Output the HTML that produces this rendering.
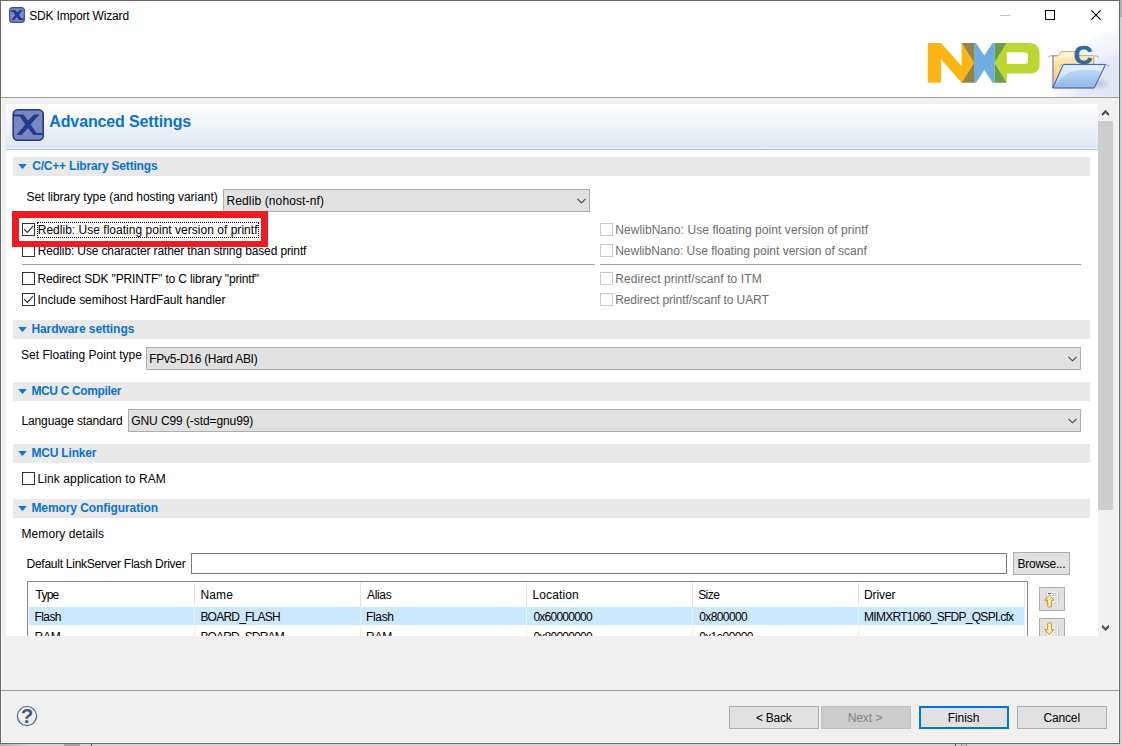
<!DOCTYPE html>
<html>
<head>
<meta charset="utf-8">
<title>SDK Import Wizard</title>
<style>
html,body{margin:0;padding:0;}
body{width:1122px;height:746px;overflow:hidden;background:#e1e1e1;font-family:"Liberation Sans",sans-serif;font-size:12px;color:#000;position:relative;}
.a{position:absolute;}
.t{position:absolute;white-space:nowrap;line-height:14px;height:14px;}
.b{font-weight:bold;color:#0a72d5;}
.sec{position:absolute;left:13px;width:1077px;height:19px;background:#e9e9e9;}
.sec svg{position:absolute;left:5px;top:7px;}
.cb{position:absolute;width:11px;height:11px;border:1px solid #333;background:#fff;}
.cb.dis{border-color:#cccccc;}
.cb svg{position:absolute;left:0;top:0;}
.combo{position:absolute;height:21px;border:1px solid #adadad;background:#e1e1e1;}
.combo svg{position:absolute;right:3px;top:8px;}
.btn{position:absolute;border:1px solid #adadad;background:#e1e1e1;box-sizing:border-box;}
.gray{color:#6d6d6d;}
.vl{position:absolute;width:1px;background:#f0f0f0;top:583px;height:53px;}
.vl b{position:absolute;left:0;top:0;width:1px;height:24px;background:#e2e2e2;}
.vl u{position:absolute;left:0;top:24px;width:1px;height:18px;background:#e6f3ff;}
</style>
</head>
<body>
<div class="a" style="left:1120px;top:0;width:2px;height:17px;background:#b0b0b0"></div>
<div class="a" style="left:1120px;top:17px;width:2px;height:729px;background:#cfcfcf"></div>
<div class="a" style="left:0;top:744px;width:1122px;height:2px;background:linear-gradient(90deg,#b4b4b4 0,#d2d2d2 30px,#d2d2d2 100%)"></div>
<div class="a" style="left:64px;top:744px;width:16px;height:2px;background:#a4a4a4"></div>
<div class="a" style="left:91px;top:744px;width:1px;height:2px;background:#555"></div>
<div class="a" style="left:955px;top:744px;width:1px;height:2px;background:#555"></div>
<div class="a" style="left:961px;top:744px;width:6px;height:2px;background:#c4c4c4;border-left:1px solid #999;border-right:1px solid #999;box-sizing:border-box"></div>
<div class="a" style="left:0;top:0;width:1118px;height:742px;border:1px solid #6b6b6b;background:#f0f0f0"></div>
<div class="a" id="titlearea" style="left:1px;top:1px;width:1118px;height:96px;background:#fff;overflow:hidden">
<div class="a" style="left:1018px;top:0;width:100px;height:96px;background:radial-gradient(circle at 106px 102px, #dfe4f5 0, #e3e8f6 40px, #e6eaf7 47px, #eff2fa 53px, #f5f7fc 68px, rgba(255,255,255,0) 75px)"></div>
</div>
<svg class="a" style="left:9px;top:7px" width="16" height="16" viewBox="0 0 32 32"><rect x="1.2" y="1.2" width="29.6" height="29.6" rx="6" fill="#7f89c1" stroke="#3a50a0" stroke-width="2.2"/><path d="M4 6.5 L13 6.5 L16.5 11.5 L21 6.5 L27 6.5 L19.5 15.5 L24.5 23 L29 23 L29 26 L20.5 26 L16 19.5 L10.5 26 L5 26 L12.8 16 L8.5 9.5 L4 9.5 Z" fill="#1c3c8e" stroke="#1c3c8e" stroke-width="0.5" stroke-linejoin="round"/></svg>
<div class="t " style="left:29.2px;top:9px;letter-spacing:-0.175px;">SDK Import Wizard</div>
<div class="a" style="left:1000px;top:15px;width:10px;height:1px;background:#c0c0c0"></div>
<div class="a" style="left:1045px;top:10px;width:8px;height:8px;border:1px solid #000"></div>
<svg class="a" style="left:1091px;top:10px" width="10" height="10" viewBox="0 0 10 10"><path d="M0.3 0.3 L9.7 9.7 M9.7 0.3 L0.3 9.7" stroke="#000" stroke-width="1.1" fill="none"/></svg>
<svg class="a" style="left:920px;top:36px" width="130" height="54" viewBox="920 36 130 54">
<polygon points="927.8,42.9 941,42.9 961.6,66 961.6,42.9 974,62.8 961.6,82.7 941,59.2 941,82.7 927.8,82.7" fill="#fdb515"/>
<polygon points="961.6,42.9 974,42.9 974,62.8" fill="#928647"/>
<polygon points="961.6,82.7 974,82.7 974,62.8" fill="#928647"/>
<polygon points="974,42.9 976,42.9 984.3,55.5 992.6,42.9 994.7,42.9 994.7,82.7 992.6,82.7 984.3,70 976,82.7 974,82.7" fill="#6daedf"/>
<polygon points="994.7,42.9 1006.8,42.9 994.7,62.8" fill="#6b9c47"/>
<polygon points="994.7,82.7 1006.8,82.7 994.7,62.8" fill="#6b9c47"/>
<path d="M1006.8,42.9 L1028.6,42.9 Q1039.6,42.9 1039.6,53.9 L1039.6,64.6 Q1039.6,73.6 1030.6,73.6 L1006.8,73.6 L1006.8,82.7 L994.7,62.8 Z M1006.8,52.3 L1006.8,63.9 L1025,63.9 Q1028,63.9 1028,60.9 L1028,55.3 Q1028,52.3 1025,52.3 Z" fill="#bdd730" fill-rule="evenodd"/>
</svg>
<svg class="a" style="left:1044px;top:40px" width="70" height="54" viewBox="1044 40 70 54">
<defs>
<linearGradient id="fb" x1="0" y1="0" x2="0" y2="1"><stop offset="0" stop-color="#fefae8"/><stop offset="0.25" stop-color="#fbe9ae"/><stop offset="1" stop-color="#f2c95f"/></linearGradient>
<linearGradient id="ff" x1="0" y1="0" x2="0" y2="1"><stop offset="0" stop-color="#cfe4fa"/><stop offset="1" stop-color="#8db6e8"/></linearGradient>
<radialGradient id="sh" cx="0.5" cy="0.5" r="0.5"><stop offset="0" stop-color="#8a86a8" stop-opacity="0.35"/><stop offset="1" stop-color="#8a86a8" stop-opacity="0"/></radialGradient>
</defs>
<ellipse cx="1099" cy="84" rx="12" ry="7" fill="url(#sh)"/>
<path d="M1053,87.7 L1053,55.7 L1057.6,55.7 Q1058.6,55.7 1059.2,54.6 L1060.2,52.8 Q1060.9,51.6 1062,51.6 L1075,51.6 L1076,55.7 L1093.8,55.7 L1093.8,87.7 Z" fill="url(#fb)" stroke="#c39a3a" stroke-width="0.9"/>
<path d="M1053,87.7 L1053,56" stroke="#8f8fd0" stroke-width="1.2"/>
<path d="M1048.5,57.5 Q1049,55.6 1051,55.8 L1057,55.8 M1095,55.8 Q1098.5,55.6 1098.8,57.8 M1059.5,66.6 Q1060,64.6 1062,64.6 M1106,64.6 Q1108.6,64.8 1108.8,67" stroke="#9a9a9a" stroke-width="0.9" fill="none"/>
<text x="1073.8" y="63.8" font-family="'Liberation Sans',sans-serif" font-weight="bold" font-size="26" fill="#33689c" stroke="#33689c" stroke-width="0.7">C</text>
<path d="M1063.3,64.4 L1105.6,64.4 L1094.2,88 L1052.7,88 Z" fill="url(#ff)" stroke="#3756c4" stroke-width="1"/>
<path d="M1064.2,65.4 L1104,65.4 L1101,71.5 Q1080,66.5 1066.5,74 Q1058,80 1054.6,87 Z" fill="#ffffff" fill-opacity="0.45"/>
</svg>
<div class="a" style="left:1px;top:97px;width:1118px;height:1px;background:#a0a0a0"></div>
<div class="a" style="left:6px;top:104px;width:1092px;height:532px;background:#fff"></div>
<div class="a" style="left:6px;top:104px;width:1092px;height:44px;background:linear-gradient(#ffffff 0,#fdfdfe 10%,#e0e7f2 100%)"></div>
<div class="a" style="left:6px;top:148px;width:1092px;height:1px;background:#eef2f8"></div>
<div class="a" style="left:6px;top:149px;width:1092px;height:1px;background:#a9c0dd"></div>
<svg class="a" style="left:12px;top:109px" width="32" height="32" viewBox="0 0 32 32"><rect x="1.2" y="0.8" width="30" height="30.4" rx="4.5" fill="#7b85be" stroke="#1c3c8e" stroke-width="1.6"/><path d="M2 5.5 L11.5 5.5 L16 11.5 L22 5.5 L27.5 5.5 L18.6 15.5 L24.5 24 L30 24 L30 26 L21.5 26 L16 19 L9.5 26 L4.5 26 L13.2 15.6 L8 7.5 L2 7.5 Z" fill="#1c3c8e"/></svg>
<div class="a b" style="left:49.3px;top:113px;font-size:16px;white-space:nowrap;line-height:18px;letter-spacing:-0.131px">Advanced Settings</div>
<div class="a" style="left:1098px;top:104px;width:17px;height:532px;background:#f0f0f0"></div>
<div class="a" style="left:1098px;top:121px;width:15px;height:389px;background:#cdcdcd"></div>
<svg class="a" style="left:1100px;top:108px" width="12" height="10" viewBox="1100 108 12 10"><polygon points="1105.5,109.8 1109.3,113.7 1108.6,116.1 1105.5,113 1102.4,116.1 1101.7,113.7" fill="#505050"/></svg>
<svg class="a" style="left:1100px;top:623px" width="12" height="10" viewBox="1100 623 12 10"><polygon points="1101.7,627.2 1102.4,624.8 1105.5,627.9 1108.6,624.8 1109.3,627.2 1105.5,631.1" fill="#505050"/></svg>
<div class="a" style="left:1118px;top:98px;width:1px;height:645px;background:#fbfbfb"></div>
<div class="a" style="left:1px;top:98px;width:1px;height:645px;background:#fbfbfb"></div>
<div class="a" style="left:1px;top:742px;width:1118px;height:1px;background:#fbfbfb"></div>
<div class="sec" style="top:157px"><svg width="9" height="5" viewBox="0 0 9 5"><polygon points="0.2,0 8.8,0 4.5,5" fill="#0b74de"/></svg></div>
<div class="t b" style="left:32.2px;top:159px;letter-spacing:-0.19px;">C/C++ Library Settings</div>
<div class="sec" style="top:320px"><svg width="9" height="5" viewBox="0 0 9 5"><polygon points="0.2,0 8.8,0 4.5,5" fill="#0b74de"/></svg></div>
<div class="t b" style="left:31.4px;top:322px;letter-spacing:-0.069px;">Hardware settings</div>
<div class="sec" style="top:382px"><svg width="9" height="5" viewBox="0 0 9 5"><polygon points="0.2,0 8.8,0 4.5,5" fill="#0b74de"/></svg></div>
<div class="t b" style="left:31.4px;top:384px;letter-spacing:-0.354px;">MCU C Compiler</div>
<div class="sec" style="top:444px"><svg width="9" height="5" viewBox="0 0 9 5"><polygon points="0.2,0 8.8,0 4.5,5" fill="#0b74de"/></svg></div>
<div class="t b" style="left:31.4px;top:446px;letter-spacing:-0.178px;">MCU Linker</div>
<div class="sec" style="top:499px"><svg width="9" height="5" viewBox="0 0 9 5"><polygon points="0.2,0 8.8,0 4.5,5" fill="#0b74de"/></svg></div>
<div class="t b" style="left:31.4px;top:501px;letter-spacing:-0.074px;">Memory Configuration</div>
<div class="t " style="left:26.5px;top:190px;letter-spacing:-0.041px;">Set library type (and hosting variant)</div>
<div class="combo" style="left:223px;top:189px;width:365px"><svg width="9" height="6" viewBox="0 0 9 6"><path d="M0.5 0.8 L4.5 4.8 L8.5 0.8" stroke="#404040" stroke-width="1.1" fill="none"/></svg></div>
<div class="t " style="left:226.5px;top:194px;letter-spacing:0.118px;">Redlib (nohost-nf)</div>
<div class="cb" style="left:22px;top:223px"><svg width="11" height="11" viewBox="0 0 11 11"><path d="M1.2 5.2 L4.3 8.4 L10 2.2" stroke="#333" stroke-width="1.2" fill="none"/></svg></div>
<div class="t " style="left:37.7px;top:223px;letter-spacing:0.023px;">Redlib: Use floating point version of printf</div>
<div class="a" style="left:37px;top:222px;width:222px;height:16px;border:1px dotted #000;box-sizing:border-box"></div>
<div class="cb" style="left:22px;top:244px"></div>
<div class="t " style="left:37.7px;top:244px;letter-spacing:-0.129px;">Redlib: Use character rather than string based printf</div>
<div class="cb" style="left:22px;top:272px"></div>
<div class="t " style="left:37.5px;top:272px;letter-spacing:-0.15px;">Redirect SDK &quot;PRINTF&quot; to C library &quot;printf&quot;</div>
<div class="cb" style="left:22px;top:293px"><svg width="11" height="11" viewBox="0 0 11 11"><path d="M1.2 5.2 L4.3 8.4 L10 2.2" stroke="#333" stroke-width="1.2" fill="none"/></svg></div>
<div class="t " style="left:37.5px;top:293px;letter-spacing:-0.045px;">Include semihost HardFault handler</div>
<div class="a" style="left:22px;top:264px;width:573px;height:1px;background:#a0a0a0"></div>
<div class="a" style="left:600px;top:264px;width:481px;height:1px;background:#a0a0a0"></div>
<div class="cb dis" style="left:600px;top:223px"></div>
<div class="t gray" style="left:615.2px;top:223px;letter-spacing:0.072px;">NewlibNano: Use floating point version of printf</div>
<div class="cb dis" style="left:600px;top:244px"></div>
<div class="t gray" style="left:615.2px;top:244px;letter-spacing:0.002px;">NewlibNano: Use floating point version of scanf</div>
<div class="cb dis" style="left:600px;top:272px"></div>
<div class="t gray" style="left:615.2px;top:272px;letter-spacing:0.089px;">Redirect printf/scanf to ITM</div>
<div class="cb dis" style="left:600px;top:293px"></div>
<div class="t gray" style="left:615.2px;top:293px;letter-spacing:-0.079px;">Redirect printf/scanf to UART</div>
<div class="a" style="left:12px;top:211px;width:242px;height:23px;border:7px solid #ec1c24;border-bottom-width:6px"></div>
<div class="t " style="left:21.1px;top:348px;letter-spacing:0.005px;">Set Floating Point type</div>
<div class="combo" style="left:146px;top:347px;width:933px"><svg width="9" height="6" viewBox="0 0 9 6"><path d="M0.5 0.8 L4.5 4.8 L8.5 0.8" stroke="#404040" stroke-width="1.1" fill="none"/></svg></div>
<div class="t " style="left:149.3px;top:352px;letter-spacing:-0.278px;">FPv5-D16 (Hard ABI)</div>
<div class="t " style="left:21.5px;top:414px;letter-spacing:-0.138px;">Language standard</div>
<div class="combo" style="left:128px;top:409px;width:951px"><svg width="9" height="6" viewBox="0 0 9 6"><path d="M0.5 0.8 L4.5 4.8 L8.5 0.8" stroke="#404040" stroke-width="1.1" fill="none"/></svg></div>
<div class="t " style="left:131.3px;top:414px;letter-spacing:-0.089px;">GNU C99 (-std=gnu99)</div>
<div class="cb" style="left:22px;top:472px"></div>
<div class="t " style="left:37.5px;top:472px;letter-spacing:0.1px;">Link application to RAM</div>
<div class="t " style="left:21.5px;top:527px;letter-spacing:0.085px;">Memory details</div>
<div class="t " style="left:26.5px;top:557px;letter-spacing:-0.25px;">Default LinkServer Flash Driver</div>
<div class="a" style="left:191px;top:553px;width:814px;height:19px;border:1px solid #7a7a7a;background:#fff"></div>
<div class="btn" style="left:1013px;top:552px;width:57px;height:23px"></div>
<div class="t " style="left:1017.5px;top:557px;letter-spacing:-0.25px;">Browse...</div>
<div class="a" style="left:27px;top:581px;width:999px;height:60px;border:1px solid #828790;background:#fff"></div>
<div class="a" style="left:29px;top:607px;width:996px;height:18px;background:#cce8ff"></div>
<div class="vl" style="left:194px"><b></b><u></u></div>
<div class="vl" style="left:360px"><b></b><u></u></div>
<div class="vl" style="left:526px"><b></b><u></u></div>
<div class="vl" style="left:692px"><b></b><u></u></div>
<div class="vl" style="left:858px"><b></b><u></u></div>
<div class="vl" style="left:1024px"><b></b><u></u></div>
<div class="t " style="left:35.5px;top:588px;letter-spacing:-0.767px;">Type</div>
<div class="t " style="left:34.5px;top:610px;letter-spacing:-0.575px;">Flash</div>
<div class="t " style="left:34.5px;top:630px;letter-spacing:-0.25px;">RAM</div>
<div class="t " style="left:200.4px;top:588px;letter-spacing:0.167px;">Name</div>
<div class="t " style="left:200.4px;top:610px;letter-spacing:-0.78px;">BOARD_FLASH</div>
<div class="t " style="left:200.4px;top:630px;letter-spacing:-0.84px;">BOARD_SDRAM</div>
<div class="t " style="left:367.0px;top:588px;letter-spacing:-0.325px;">Alias</div>
<div class="t " style="left:366.0px;top:610px;letter-spacing:-0.325px;">Flash</div>
<div class="t " style="left:366.0px;top:630px;letter-spacing:-0.25px;">RAM</div>
<div class="t " style="left:532.4px;top:588px;letter-spacing:0.143px;">Location</div>
<div class="t " style="left:533.4px;top:610px;letter-spacing:-0.756px;">0x60000000</div>
<div class="t " style="left:533.4px;top:630px;letter-spacing:-0.756px;">0x80000000</div>
<div class="t " style="left:698.2px;top:588px;letter-spacing:-0.567px;">Size</div>
<div class="t " style="left:699.2px;top:610px;letter-spacing:-0.6px;">0x800000</div>
<div class="t " style="left:699.2px;top:630px;letter-spacing:-0.65px;">0x1e00000</div>
<div class="t " style="left:864.0px;top:588px;letter-spacing:-0.1px;">Driver</div>
<div class="t " style="left:864.0px;top:610px;letter-spacing:-0.713px;">MIMXRT1060_SFDP_QSPI.cfx</div>
<div class="btn" style="left:1039px;top:587px;width:26px;height:24px"></div>
<svg class="a" style="left:1043px;top:590px" width="18" height="18" viewBox="1043 590 18 18">
<defs><linearGradient id="ag" x1="0" y1="0" x2="1" y2="0"><stop offset="0" stop-color="#f7c95a"/><stop offset="0.5" stop-color="#fff3c4"/><stop offset="1" stop-color="#f3b83e"/></linearGradient></defs>
<rect x="1046.3" y="591.8" width="12.4" height="12.3" fill="#f4f8fd"/>
<path d="M1046.3,591.8 L1046.3,604 M1058.6,591.8 L1058.6,604" stroke="#c9b26a" stroke-width="0.7"/>
<path d="M1048,593.5 L1051,593.5" stroke="#2f5f9e" stroke-width="1.1"/>
<path d="M1052.2,593.5 L1057,593.5 M1052.2,595.5 L1054,595.5 M1055,595.5 L1057,595.5 M1054,597.5 L1057,597.5 M1055,599.5 L1057,599.5 M1055,601.5 L1057,601.5 M1053,603.3 L1057,603.3" stroke="#a9c4e6" stroke-width="0.9"/>
<path d="M1049.5,594.9 L1054.1,600.3 L1051.6,600.3 L1051.6,605.8 Q1051.6,606.8 1050.6,606.8 L1048.6,606.8 Q1047.6,606.8 1047.6,605.8 L1047.6,600.3 L1044.9,600.3 Z" fill="url(#ag)" stroke="#cf8a1c" stroke-width="0.9" stroke-linejoin="round"/>
</svg>
<div class="btn" style="left:1039px;top:618px;width:26px;height:24px"></div>
<svg class="a" style="left:1043px;top:620px" width="18" height="18" viewBox="1043 620 18 18">
<rect x="1046.3" y="625.6" width="12.4" height="12.3" fill="#f4f8fd"/>
<path d="M1046.3,632 L1046.3,638 M1058.6,625.8 L1058.6,638" stroke="#c9b26a" stroke-width="0.7"/>
<path d="M1053,626.8 L1057,626.8 M1055,628.8 L1057,628.8 M1055,630.8 L1057,630.8 M1054,632.8 L1057,632.8 M1052.2,634.8 L1054,634.8 M1055,634.8 L1057,634.8" stroke="#a9c4e6" stroke-width="0.9"/>
<path d="M1049.5,634.9 L1054.1,629.5 L1051.6,629.5 L1051.6,624 Q1051.6,623 1050.6,623 L1048.6,623 Q1047.6,623 1047.6,624 L1047.6,629.5 L1044.9,629.5 Z" fill="url(#ag)" stroke="#cf8a1c" stroke-width="0.9" stroke-linejoin="round"/>
</svg>
<div class="a" style="left:2px;top:636px;width:1116px;height:54px;background:#f0f0f0"></div>
<div class="a" style="left:1px;top:690px;width:1118px;height:1px;background:#a0a0a0"></div>
<svg class="a" style="left:15px;top:704px" width="24" height="24" viewBox="15 704 24 24"><defs><linearGradient id="hg" x1="0" y1="0" x2="0" y2="1"><stop offset="0" stop-color="#fdfdfd"/><stop offset="1" stop-color="#e6e6e6"/></linearGradient></defs><circle cx="27" cy="716.1" r="9.6" fill="url(#hg)" stroke="#4a6188" stroke-width="1.2"/><text x="27.1" y="722.8" text-anchor="middle" font-family="'Liberation Sans',sans-serif" font-weight="bold" font-size="20.5" fill="#3f5880">?</text></svg>
<div class="btn" style="left:729px;top:706px;width:90px;height:23px;"></div>
<div class="t " style="left:755.9px;top:711px;letter-spacing:-0.22px;">&lt; Back</div>
<div class="btn" style="left:821px;top:706px;width:90px;height:23px;background:#cccccc;border-color:#bfbfbf;"></div>
<div class="t " style="left:847.7px;top:711px;letter-spacing:-0.1px;color:#838383;">Next &gt;</div>
<div class="btn" style="left:919px;top:706px;width:90px;height:23px;border:2px solid #0078d7;"></div>
<div class="t " style="left:947.7px;top:711px;letter-spacing:-0.06px;">Finish</div>
<div class="btn" style="left:1017px;top:706px;width:90px;height:23px;"></div>
<div class="t " style="left:1043.5px;top:711px;letter-spacing:-0.16px;">Cancel</div>
</body>
</html>
